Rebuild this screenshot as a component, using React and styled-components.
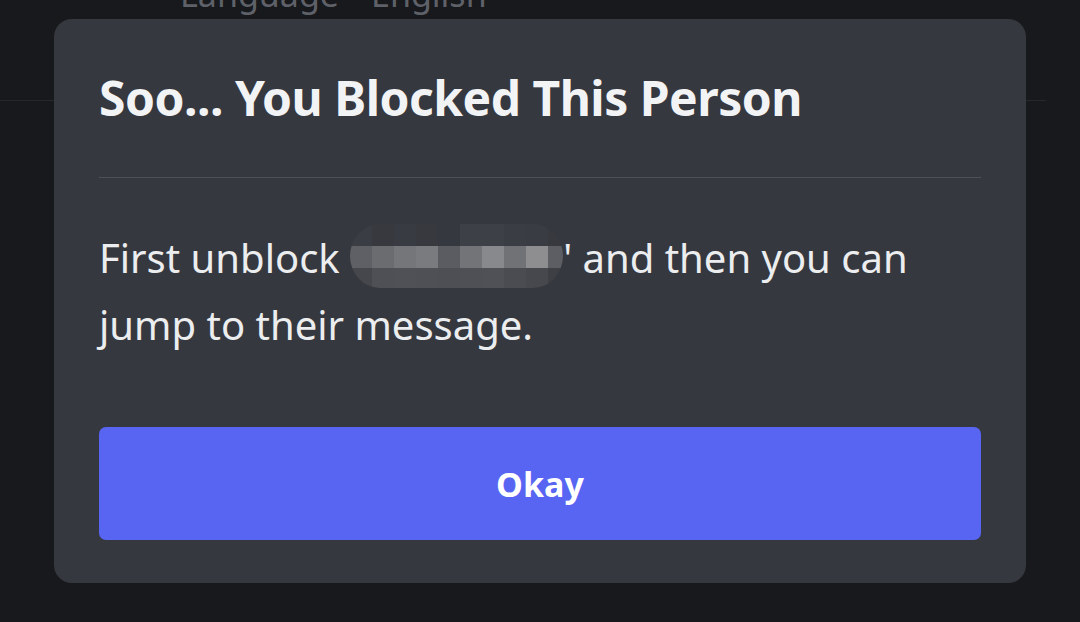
import React from "react";
import styled, { createGlobalStyle } from "styled-components";

const Global = createGlobalStyle`
  html, body { margin: 0; padding: 0; background: #18191c; }
  body { font-family: "Noto Sans", "Open Sans", sans-serif; overflow: hidden; }
  #root { width: 1080px; height: 622px; }
`;

const Page = styled.div`
  position: relative;
  width: 1080px;
  height: 622px;
  background: #18191c;
  overflow: hidden;
`;

const SettingRow = styled.div`
  display: flex;
  gap: 32px;
  width: 1046px;
  height: 101px;
  box-sizing: border-box;
  padding-left: 180px;
  border-bottom: 1px solid #26272b;
`;

const SettingText = styled.span`
  margin-top: -23px;
  font-size: 34px;
  line-height: 34px;
  color: #5f6169;
`;

const Modal = styled.div`
  position: absolute;
  left: 54px;
  top: 19px;
  width: 972px;
  height: 564px;
  box-sizing: border-box;
  padding: 50px 45px 43px;
  background: #36383f;
  border-radius: 18px;
  display: flex;
  flex-direction: column;
`;

const Title = styled.h1`
  margin: 0;
  font-size: 48px;
  line-height: 58px;
  font-weight: 700;
  letter-spacing: -0.5px;
  color: #f2f3f5;
`;

const Divider = styled.div`
  height: 1px;
  margin-top: 50px;
  background: #4e5058;
`;

const Body = styled.p`
  margin: 46px 0 0;
  font-size: 40px;
  line-height: 67px;
  color: #ebedef;
`;

const MosaicSvg = styled.svg`
  display: inline-block;
  width: 213px;
  height: 64px;
  vertical-align: -15px;
`;

const Button = styled.button`
  margin-top: auto;
  height: 113px;
  border: none;
  border-radius: 7px;
  background: #5865f2;
  color: #ffffff;
  font-family: inherit;
  font-size: 34px;
  font-weight: 700;
  cursor: pointer;
`;

const mosaicColors = [
  ["#3b3d44", "#37393f", "#393b42", "#37393f", "#36383f", "#3e4047", "#3e4047", "#3b3d44", "#3a3c43", "#37393f"],
  ["#5f6065", "#6b6c70", "#75767a", "#7a7b7f", "#5a5c62", "#737478", "#88898c", "#717276", "#8e8e90", "#5c5e63"],
  ["#45474d", "#4f5055", "#505156", "#4e5055", "#4d4f55", "#4e5056", "#505156", "#4a4c52", "#46484e", "#3d3f45"],
];

function Mosaic() {
  const rowH = [22, 22, 20];
  const rowY = [0, 22, 44];
  return (
    <MosaicSvg viewBox="0 0 213 64" aria-label="hidden username">
      <defs>
        <clipPath id="pill">
          <rect x="0" y="0" width="213" height="64" rx="30" ry="32" />
        </clipPath>
      </defs>
      <g clipPath="url(#pill)">
        {mosaicColors.map((row, r) =>
          row.map((c, i) => (
            <rect
              key={`${r}-${i}`}
              x={i * 22}
              y={rowY[r]}
              width={i === 9 ? 15 : 22}
              height={rowH[r]}
              fill={c}
            />
          ))
        )}
      </g>
    </MosaicSvg>
  );
}

export default function App() {
  return (
    <>
      <Global />
      <Page>
        <SettingRow>
          <SettingText>Language</SettingText>
          <SettingText>English</SettingText>
        </SettingRow>
        <Modal>
          <Title>Soo... You Blocked This Person</Title>
          <Divider />
          <Body>
            First unblock <Mosaic />' and then you can
            <br />
            jump to their message.
          </Body>
          <Button>Okay</Button>
        </Modal>
      </Page>
    </>
  );
}
